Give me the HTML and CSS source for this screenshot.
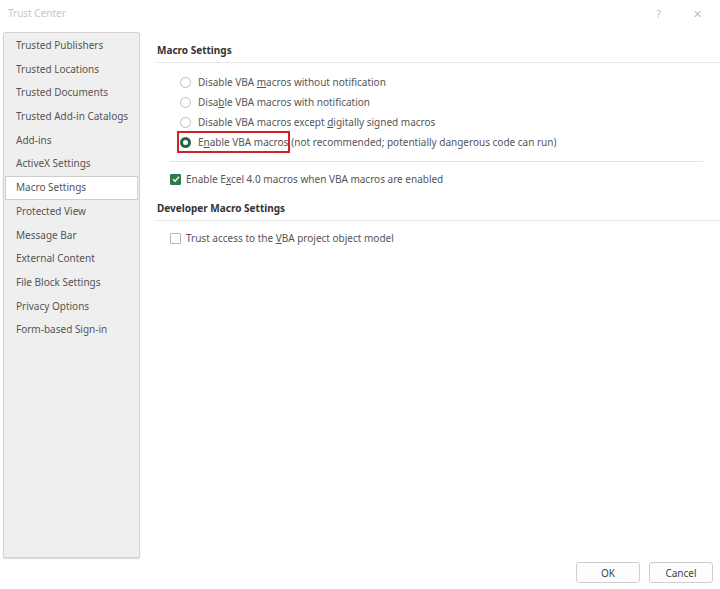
FILE: index.html
```html
<!DOCTYPE html>
<html lang="en">
<head>
    <meta charset="UTF-8">
    <meta name="viewport" content="width=device-width, initial-scale=1.0">
    <title>Trust Center</title>
    <link rel="stylesheet" href="styles.css">
</head>
<body>

<div class="dialog">
    <!-- Title bar -->
    <div class="titlebar">
        <span class="title">Trust Center</span>
        <span class="title-btn help">?</span>
        <span class="title-btn close">&#x2715;</span>
    </div>

    <div class="main">
        <!-- Left navigation -->
        <ul class="nav">
            <li>Trusted Publishers</li>
            <li>Trusted Locations</li>
            <li>Trusted Documents</li>
            <li>Trusted Add-in Catalogs</li>
            <li>Add-ins</li>
            <li>ActiveX Settings</li>
            <li class="active">Macro Settings</li>
            <li>Protected View</li>
            <li>Message Bar</li>
            <li>External Content</li>
            <li>File Block Settings</li>
            <li>Privacy Options</li>
            <li>Form-based Sign-in</li>
        </ul>

        <!-- Settings panel -->
        <div class="content">
            <h3 class="section-title">Macro Settings</h3>
            <div class="options">
                <label class="option"><span class="radio"></span><span>Disable VBA <u>m</u>acros without notification</span></label>
                <label class="option"><span class="radio"></span><span>Disa<u>b</u>le VBA macros with notification</span></label>
                <label class="option"><span class="radio"></span><span>Disable VBA macros except <u>d</u>igitally signed macros</span></label>
                <label class="option"><span class="highlight"><span class="radio checked"></span><span>E<u>n</u>able VBA macros</span></span><span>(not recommended; potentially dangerous code can run)</span></label>
            </div>
            <div class="divider"></div>
            <label class="check-row"><span class="checkbox checked">
                <svg width="8" height="8" viewBox="0 0 8 8"><path d="M1 4.2 L3.1 6.2 L7 1.8" fill="none" stroke="#fff" stroke-width="1.4"/></svg>
            </span><span>Enable E<u>x</u>cel 4.0 macros when VBA macros are enabled</span></label>

            <h3 class="section-title dev">Developer Macro Settings</h3>
            <label class="check-row"><span class="checkbox"></span><span>Trust access to the <u>V</u>BA project object model</span></label>
        </div>
    </div>

    <div class="footer">
        <button class="btn">OK</button>
        <button class="btn">Cancel</button>
    </div>
</div>

</body>
</html>
```

FILE: styles.css
```css
body {
    margin: 0;
    background-color: #ffffff;
    font-family: "Noto Sans", "Open Sans", sans-serif;
    font-size: 10px;
    color: #555;
}
.dialog {
    width: 720px;
    height: 589px;
    display: flex;
    flex-direction: column;
}
.titlebar {
    height: 32px;
    display: flex;
    align-items: center;
    padding: 0 8px;
    box-sizing: border-box;
}
.title {
    flex: 1;
    color: #c8c8c8;
    font-size: 10px;
    margin-top: -6px;
}
.title-btn {
    color: #c0c0c0;
    font-size: 11px;
    margin-top: -6px;
}
.help {
    margin-right: 32px;
}
.close {
    margin-right: 10px;
}
.main {
    flex: 1;
    display: flex;
}
.nav {
    list-style: none;
    margin: 0 0 0 3px;
    padding: 1px 0;
    width: 137px;
    box-sizing: border-box;
    background-color: #efefef;
    border: 1px solid #d2d2d2;
    border-radius: 2px;
    box-shadow: 0 1px 1px #d8d8d8;
}
.nav li {
    height: 23.7px;
    line-height: 23.7px;
    padding-left: 11px;
    margin: 0 1px;
    box-sizing: border-box;
    white-space: nowrap;
}
.nav li.active {
    background-color: #ffffff;
    border: 1px solid #cfcfcf;
    line-height: 21.7px;
    padding-left: 10px;
}
.content {
    flex: 1;
    padding: 6px 0 0 16px;
}
.section-title {
    margin: 0;
    font-size: 10px;
    line-height: 14px;
    font-weight: bold;
    color: #333;
    padding: 5px 0 5px 1px;
    border-bottom: 1px solid #e6e6e6;
}
.section-title.dev {
    margin-top: 7px;
}
.options {
    padding: 9px 0 0 24px;
}
.option {
    display: flex;
    align-items: center;
    height: 20px;
    white-space: nowrap;
}
.radio {
    width: 9px;
    height: 9px;
    border: 1px solid #bcbcbc;
    border-radius: 50%;
    margin-right: 7px;
    flex-shrink: 0;
}
.radio.checked {
    width: 5px;
    height: 5px;
    border: 3px solid #2a6447;
}
.highlight {
    display: flex;
    align-items: center;
    border: 2px solid #d3232a;
    height: 22px;
    box-sizing: border-box;
    padding: 0 0 0 1px;
    margin-left: -3px;
    margin-right: 1px;
}
.divider {
    height: 1px;
    background-color: #e3e3e3;
    margin: 9px 17px 0 14px;
}
.check-row {
    display: flex;
    align-items: center;
    height: 20px;
    margin: 7px 0 0 14px;
    white-space: nowrap;
}
.checkbox {
    width: 9px;
    height: 9px;
    border: 1px solid #b5b5b5;
    border-radius: 1px;
    margin-right: 5px;
    display: flex;
    align-items: center;
    justify-content: center;
}
.checkbox.checked {
    background-color: #2f7a4f;
    border-color: #2f7a4f;
}
.footer {
    height: 31px;
    display: flex;
    justify-content: flex-end;
    align-items: flex-start;
    padding: 4px 7px 0 0;
    box-sizing: border-box;
}
.btn {
    width: 64px;
    height: 21px;
    margin-left: 9px;
    font-family: "Noto Sans", "Open Sans", sans-serif;
    font-size: 10px;
    color: #444;
    background-color: #fdfdfd;
    border: 1px solid #cdcdcd;
    border-radius: 3px;
    padding: 0;
}
```
